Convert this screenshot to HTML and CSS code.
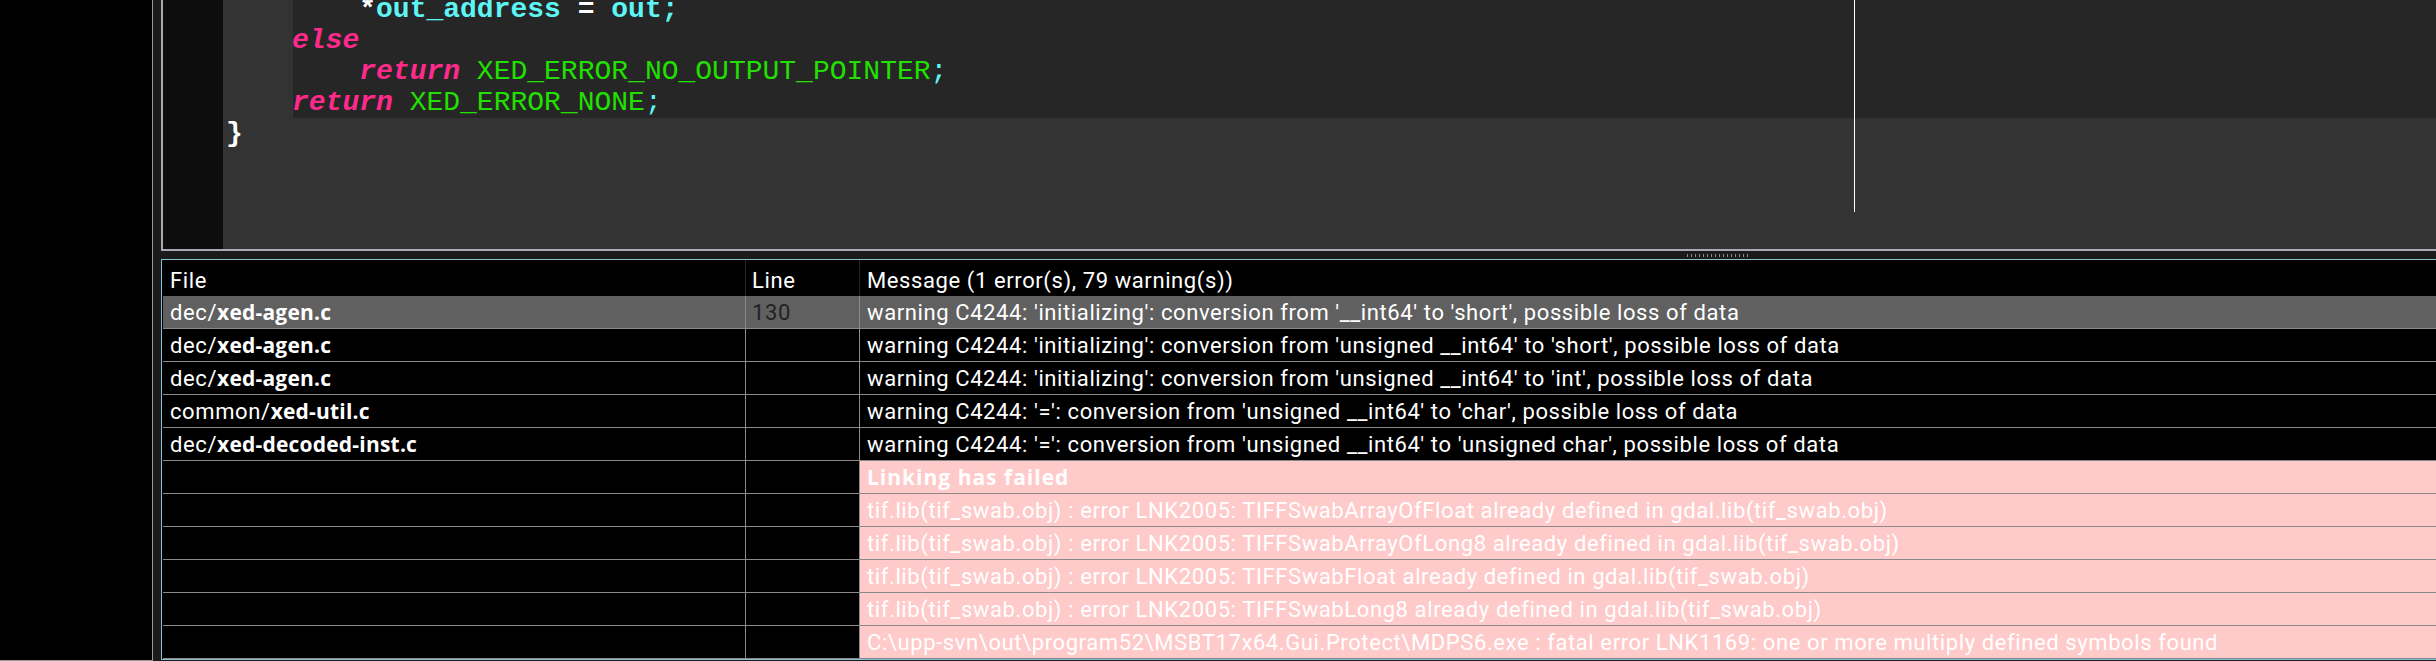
FILE: index.html
```html
<!DOCTYPE html>
<html>
<head>
<meta charset="utf-8">
<link rel="stylesheet" href="styles.css">
</head>
<body>
<div class="app">
  <aside class="leftpanel"></aside>
  <main class="main">
    <section class="editor">
      <div class="gutter"></div>
      <div class="code">
        <div class="margin-guide"></div>
        <div class="block">
          <div class="ln">    <span class="op">*</span><span class="id">out_address</span><span class="op"> = </span><span class="id">out;</span></div>
          <div class="ln"><span class="kw">else</span></div>
          <div class="ln">    <span class="kw">return</span> <span class="const">XED_ERROR_NO_OUTPUT_POINTER</span><span class="punc">;</span></div>
          <div class="ln"><span class="kw">return</span> <span class="const">XED_ERROR_NONE</span><span class="punc">;</span></div>
        </div>
        <div class="ln brace">}</div>
      </div>
    </section>
    <div class="splitter"><span class="grip"></span></div>
    <section class="results">
      <div class="row head">
        <div class="cell c-file">File</div>
        <div class="cell c-line">Line</div>
        <div class="cell c-msg">Message (1 error(s), 79 warning(s))</div>
      </div>
      <div class="row sel">
        <div class="cell c-file">dec/<b>xed-agen.c</b></div>
        <div class="cell c-line num">130</div>
        <div class="cell c-msg">warning C4244: 'initializing': conversion from '__int64' to 'short', possible loss of data</div>
      </div>
      <div class="row">
        <div class="cell c-file">dec/<b>xed-agen.c</b></div>
        <div class="cell c-line"></div>
        <div class="cell c-msg">warning C4244: 'initializing': conversion from 'unsigned __int64' to 'short', possible loss of data</div>
      </div>
      <div class="row">
        <div class="cell c-file">dec/<b>xed-agen.c</b></div>
        <div class="cell c-line"></div>
        <div class="cell c-msg">warning C4244: 'initializing': conversion from 'unsigned __int64' to 'int', possible loss of data</div>
      </div>
      <div class="row">
        <div class="cell c-file">common/<b>xed-util.c</b></div>
        <div class="cell c-line"></div>
        <div class="cell c-msg">warning C4244: '=': conversion from 'unsigned __int64' to 'char', possible loss of data</div>
      </div>
      <div class="row">
        <div class="cell c-file">dec/<b>xed-decoded-inst.c</b></div>
        <div class="cell c-line"></div>
        <div class="cell c-msg">warning C4244: '=': conversion from 'unsigned __int64' to 'unsigned char', possible loss of data</div>
      </div>
      <div class="row err">
        <div class="cell c-file"></div>
        <div class="cell c-line"></div>
        <div class="cell c-msg"><b>Linking has failed</b></div>
      </div>
      <div class="row err">
        <div class="cell c-file"></div>
        <div class="cell c-line"></div>
        <div class="cell c-msg">tif.lib(tif_swab.obj) : error LNK2005: TIFFSwabArrayOfFloat already defined in gdal.lib(tif_swab.obj)</div>
      </div>
      <div class="row err">
        <div class="cell c-file"></div>
        <div class="cell c-line"></div>
        <div class="cell c-msg">tif.lib(tif_swab.obj) : error LNK2005: TIFFSwabArrayOfLong8 already defined in gdal.lib(tif_swab.obj)</div>
      </div>
      <div class="row err">
        <div class="cell c-file"></div>
        <div class="cell c-line"></div>
        <div class="cell c-msg">tif.lib(tif_swab.obj) : error LNK2005: TIFFSwabFloat already defined in gdal.lib(tif_swab.obj)</div>
      </div>
      <div class="row err">
        <div class="cell c-file"></div>
        <div class="cell c-line"></div>
        <div class="cell c-msg">tif.lib(tif_swab.obj) : error LNK2005: TIFFSwabLong8 already defined in gdal.lib(tif_swab.obj)</div>
      </div>
      <div class="row err">
        <div class="cell c-file"></div>
        <div class="cell c-line"></div>
        <div class="cell c-msg">C:\upp-svn\out\program52\MSBT17x64.Gui.Protect\MDPS6.exe : fatal error LNK1169: one or more multiply defined symbols found</div>
      </div>
    </section>
  </main>
</div>
</body>
</html>
```

FILE: styles.css
```css
* { box-sizing: border-box; }
html, body { margin: 0; padding: 0; }
body {
  width: 2436px;
  height: 661px;
  overflow: hidden;
  background: #1b1b1b;
}
.app {
  display: flex;
  height: 661px;
}
.leftpanel {
  width: 153px;
  height: 661px;
  flex: none;
  background: #000;
  border-right: 1px solid #9a9a9a;
  border-bottom: 1px solid #9a9a9a;
}
.main {
  flex: 1;
  min-width: 0;
  padding-left: 8px;
  display: flex;
  flex-direction: column;
}
.editor {
  height: 251px;
  display: flex;
  border-left: 2px solid #a9a9b1;
  border-bottom: 2px solid #a9a9b1;
}
.gutter {
  width: 60px;
  flex: none;
  background: #0d0d0d;
}
.code {
  flex: 1;
  position: relative;
  overflow: hidden;
  background: #333333;
  padding-left: 3px;
  font-family: "Liberation Mono", "Courier New", monospace;
  font-size: 28px;
  line-height: 31px;
  color: #ffffff;
}
.block {
  margin-top: -6px;
  margin-left: 67px;
  background: #262626;
}
.ln {
  white-space: pre;
  height: 31px;
}
.block .ln { margin-left: -1px; }
.brace { font-weight: bold; }
.op { font-weight: bold; color: #ffffff; }
.id { font-weight: bold; color: #5ef5f5; }
.kw { font-weight: bold; font-style: italic; color: #ff2a8c; }
.const { color: #22e000; }
.punc { color: #5ef5f5; }
.margin-guide {
  position: absolute;
  left: 1631px;
  top: 0;
  width: 1px;
  height: 212px;
  background: #ffffff;
}
.splitter {
  height: 8px;
  display: flex;
  align-items: center;
}
.grip {
  margin-left: 1526px;
  width: 63px;
  height: 3px;
  background: repeating-linear-gradient(90deg, #8a8a8a 0 1px, transparent 1px 4px);
}
.results {
  height: 401px;
  background: #000;
  border: 1px solid #86c0d2;
  border-right: none;
  padding-left: 1px;
  font-family: "Roboto", "Liberation Sans", sans-serif;
  font-size: 22px;
  letter-spacing: 0.6px;
  color: #ffffff;
}
.row {
  display: flex;
  height: 33px;
  border-bottom: 1px solid #8a8a8a;
}
.row.head {
  height: 36px;
  border-bottom: none;
}
.cell {
  height: 100%;
  white-space: nowrap;
  overflow: hidden;
  line-height: 33px;
  padding-left: 7px;
  border-right: 1px solid #8a8a8a;
}
.head .cell {
  padding-top: 6px;
  line-height: 30px;
  border-right-color: #262626;
}
.c-file { width: 583px; flex: none; }
.c-line { width: 114px; flex: none; padding-left: 6px; }
.c-msg { flex: 1; border-right: none; }
.cell b {
  font-family: "Open Sans", "Roboto", sans-serif;
  font-weight: 700;
  font-size: 21px;
  letter-spacing: 0.2px;
}
.c-msg b { letter-spacing: 1px; }
.sel { background: #606060; }
.sel .num { color: #222222; }
.err .c-msg { background: #ffcaca; }
```
